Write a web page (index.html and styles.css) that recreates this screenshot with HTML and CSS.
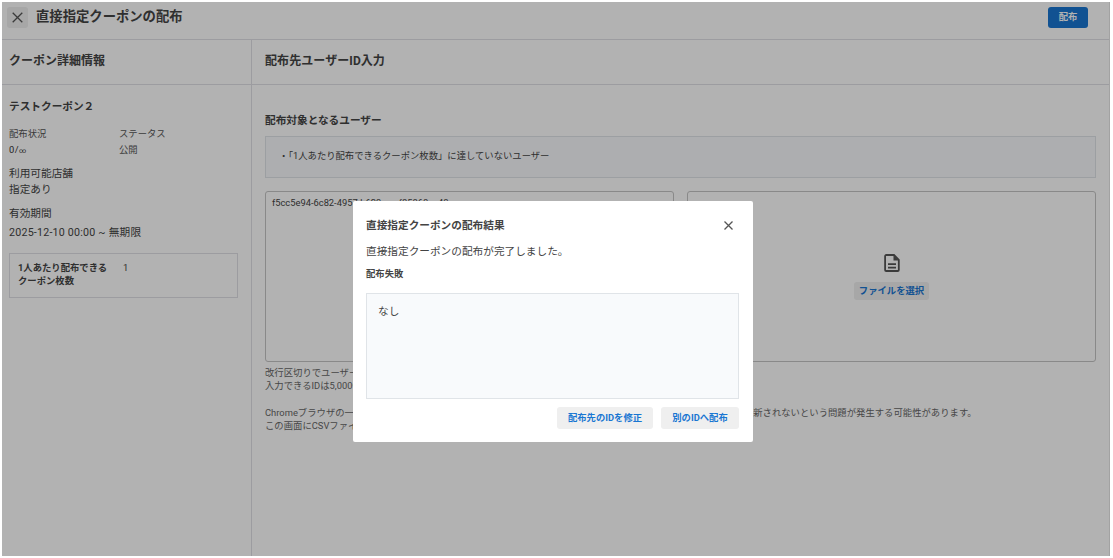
FILE: index.html
```html
<!DOCTYPE html>
<html lang="ja">

<head>
    <meta charset="utf-8">
    <title>直接指定クーポンの配布</title>
    <link rel="stylesheet" href="styles.css">
</head>

<body>
    <div class="page">
        <header class="header">
            <button class="close-page" aria-label="閉じる">
                <svg width="11" height="11" viewBox="0 0 11 11"><path d="M.7.7l9.6 9.6M10.3.7L.7 10.3" /></svg>
            </button>
            <h1>直接指定クーポンの配布</h1>
            <button class="send">配布</button>
        </header>
        <div class="columns">
            <aside class="side">
                <h2>クーポン詳細情報</h2>
                <div class="side-body">
                    <h3>テストクーポン２</h3>
                    <div class="status">
                        <div>配布状況<br /><span class="count">0/<span class="infinity">∞</span></span></div>
                        <div>ステータス<br />公開</div>
                    </div>
                    <div class="shops">利用可能店舗<br />指定あり</div>
                    <div class="period">有効期間</div>
                    <div class="dates">2025-12-10 00:00 ~ 無期限</div>
                    <div class="limit">
                        <b>1人あたり配布できるクーポン枚数</b>
                        <span>1</span>
                    </div>
                </div>
            </aside>
            <main class="main">
                <h2>配布先ユーザーID入力</h2>
                <div class="main-body">
                    <h3>配布対象となるユーザー</h3>
                    <div class="notice">・「1人あたり配布できるクーポン枚数」に達していないユーザー</div>
                    <div class="inputs">
                        <div class="ids">f5cc5e94-6c82-4957-b623-aecf85868ec48</div>
                        <div class="file">
                            <svg width="16" height="18" viewBox="0 0 16 18">
                                <path class="sheet" d="M2.2 1H10l4.8 4.8v10.1a1.1 1.1 0 0 1-1.1 1.1H2.2a1.1 1.1 0 0 1-1.1-1.1V2.1A1.1 1.1 0 0 1 2.2 1z" />
                                <path class="fold" d="M9.5 1v5.4h5.3z" />
                                <path class="sheet" d="M4 10.2h8M4 13.6h8" />
                            </svg>
                            <button class="choose">ファイルを選択</button>
                        </div>
                    </div>
                    <p class="help">改行区切りでユーザーIDを入力してください。<br />入力できるIDは5,000件までです。</p>
                    <p class="help last">Chromeブラウザの一部のバージョンにおいて、CSVファイルを選択した後内容を変更して再度選択すると、表示が更新されないという問題が発生する可能性があります。<br />この画面にCSVファイルを選択し直してください。</p>
                </div>
            </main>
        </div>
    </div>
    <div class="overlay">
        <div class="modal">
            <div class="modal-head">
                <h3>直接指定クーポンの配布結果</h3>
                <svg width="9" height="9" viewBox="0 0 9 9"><path d="M.5.5l8 8M8.5.5l-8 8" /></svg>
            </div>
            <p class="message">直接指定クーポンの配布が完了しました。</p>
            <h4>配布失敗</h4>
            <div class="result">なし</div>
            <div class="actions">
                <button>配布先のIDを修正</button>
                <button>別のIDへ配布</button>
            </div>
        </div>
    </div>
</body>

</html>
```

FILE: styles.css
```css
* {
    box-sizing: border-box;
}

body {
    margin: 0;
    height: 558px;
    padding: 2px 3px 2px 2px;
    overflow: hidden;
    background: #fff;
    color: #444;
    font-family: Roboto, "Noto Sans CJK JP", sans-serif;
    font-size: 9.33px;
    line-height: 13px;
}

h1,
h2,
h3,
h4,
p {
    margin: 0;
}

button {
    border: 0;
    padding: 0 0 1px;
    border-radius: 3px;
    background: #efefef;
    color: #1976d2;
    font: bold 9.33px/13px Roboto, "Noto Sans CJK JP", sans-serif;
    white-space: nowrap;
}

svg {
    display: block;
    fill: none;
    stroke: #555;
    stroke-width: 1.3;
}

.page {
    height: 554px;
    display: flex;
    flex-direction: column;
    border-right: 1px solid #e8e8e8;
}

.header {
    height: 38px;
    flex: none;
    display: flex;
    align-items: flex-start;
    padding: 5px 21px 0 5px;
    border-bottom: 1px solid #e0e0e6;
}

.close-page {
    width: 21px;
    height: 21px;
    display: flex;
    align-items: center;
    justify-content: center;
    padding: 0;
}

h1 {
    flex: 1;
    margin-left: 8px;
    font-size: 13.33px;
    line-height: 19px;
}

.send {
    width: 40px;
    height: 21px;
    padding-bottom: 2px;
    background: #1976d2;
    color: #fff;
}

.columns {
    flex: 1;
    display: flex;
    min-height: 0;
}

h2 {
    height: 45px;
    padding-left: 7px;
    border-bottom: 1px solid #e0e0e6;
    font-size: 12px;
    line-height: 43px;
}

h3 {
    padding-top: 1px;
    font-size: 10.67px;
    line-height: 16px;
}

.side {
    width: 250px;
    border-right: 1px solid #e0e0e6;
}

.side-body {
    padding: 13px 13px 0 7px;
}

.status {
    display: grid;
    grid-template-columns: 110px 1fr;
    margin-top: 11px;
    color: #555;
    line-height: 16px;
}

.count {
    color: #333;
    letter-spacing: .4px;
}

.infinity {
    font-size: 7px;
}

.shops,
.period,
.dates {
    margin-top: 8px;
    font-size: 10.67px;
    line-height: 16px;
}

.shops {
    margin-top: 7px;
}

.dates {
    margin-top: 3px;
    letter-spacing: .22px;
}

.limit {
    display: flex;
    height: 45px;
    margin-top: 12px;
    padding: 7px 8px;
    border: 1px solid #e0e0e6;
}

.limit b {
    width: 90px;
    margin-right: 15px;
}

.main {
    flex: 1;
    min-width: 0;
}

.main h2 {
    padding-left: 13px;
    letter-spacing: .08px;
}

.main-body {
    padding: 27px 13px 0 13px;
}

.notice {
    height: 42px;
    margin-top: 7px;
    padding-left: 13px;
    border: 1px solid #e0e4e8;
    background: #f8fafc;
    line-height: 38px;
}

.inputs {
    display: grid;
    grid-template-columns: 1fr 1fr;
    gap: 13px;
    margin-top: 13px;
}

.ids,
.file {
    height: 171px;
    border: 1px solid #c4c4c4;
    border-radius: 3px;
}

.ids {
    padding: 4px 6px;
}

.file {
    display: flex;
    flex-direction: column;
    align-items: center;
    padding-top: 62px;
}

.sheet {
    stroke-width: 1.8;
}

.fold {
    fill: #555;
    stroke: none;
}

.choose {
    width: 75px;
    height: 18px;
    margin-top: 10px;
    padding-bottom: 2px;
}

.help {
    margin-top: 4px;
    color: #666;
    letter-spacing: .02px;
    white-space: nowrap;
}

.last {
    margin-top: 14px;
}

/* result dialog over the dimmed page */
.overlay {
    position: absolute;
    top: 2px;
    left: 2px;
    width: 1108px;
    height: 554px;
    padding: 199px 0 0 351px;
    background: rgba(0, 0, 0, .3);
}

.modal {
    width: 400px;
    height: 241px;
    padding: 16px 14px 0 13px;
    border-radius: 2px;
    background: #fff;
}

.modal-head {
    display: flex;
    align-items: center;
    justify-content: space-between;
    padding-right: 6px;
}

.message {
    margin-top: 10px;
    font-size: 10.67px;
    line-height: 16px;
}

h4 {
    margin-top: 7px;
    font-size: 9.33px;
    line-height: 13px;
}

.result {
    height: 106px;
    margin-top: 13px;
    padding: 10px 11px;
    border: 1px solid #e0e4e8;
    background: #f8fafc;
    font-size: 10.67px;
    line-height: 16px;
}

.actions {
    display: flex;
    justify-content: flex-end;
    gap: 8px;
    margin-top: 8px;
}

.actions button {
    width: 96px;
    height: 22px;
}

.actions button:last-child {
    width: 78px;
}
```
